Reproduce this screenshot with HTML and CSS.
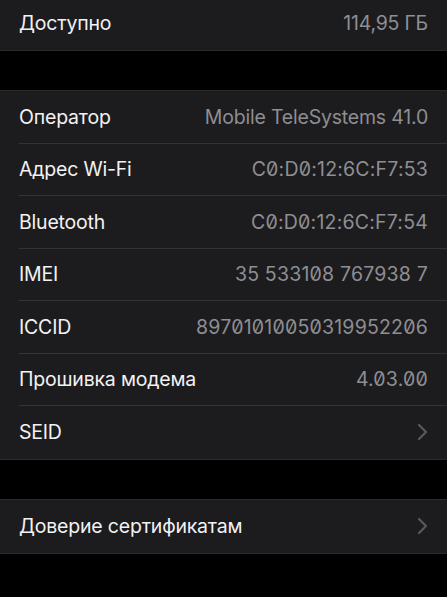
FILE: index.html
```html
<!DOCTYPE html>
<html lang="ru">
<head>
<meta charset="utf-8">
<link rel="stylesheet" href="styles.css">
</head>
<body>
<div class="page">
  <div class="group first">
    <div class="row"><span class="label">Доступно</span><span class="value">114,95 ГБ</span></div>
  </div>
  <div class="group">
    <div class="row"><span class="label">Оператор</span><span class="value">Mobile TeleSystems 41.0</span></div>
    <div class="row"><span class="label">Адрес Wi-Fi</span><span class="value num">C0:D0:12:6C:F7:53</span></div>
    <div class="row"><span class="label">Bluetooth</span><span class="value num">C0:D0:12:6C:F7:54</span></div>
    <div class="row"><span class="label">IMEI</span><span class="value num">35 533108 767938 7</span></div>
    <div class="row"><span class="label">ICCID</span><span class="value num">89701010050319952206</span></div>
    <div class="row"><span class="label">Прошивка модема</span><span class="value num">4.03.00</span></div>
    <div class="row"><span class="label">SEID</span><span class="chev"><svg width="11" height="18" viewBox="0 0 11 18"><path d="M2 2 L9 9 L2 16" fill="none" stroke="currentColor" stroke-width="2.2" stroke-linecap="round" stroke-linejoin="round"/></svg></span></div>
  </div>
  <div class="group">
    <div class="row"><span class="label">Доверие сертификатам</span><span class="chev"><svg width="11" height="18" viewBox="0 0 11 18"><path d="M2 2 L9 9 L2 16" fill="none" stroke="currentColor" stroke-width="2.2" stroke-linecap="round" stroke-linejoin="round"/></svg></span></div>
  </div>
</div>
</body>
</html>
```
FILE: styles.css
```css
html, body {
  margin: 0;
  padding: 0;
  background: #000;
}
body {
  width: 447px;
  height: 597px;
  overflow: hidden;
  font-family: Inter, "Noto Sans", sans-serif;
  font-size: 19.5px;
  -webkit-font-smoothing: antialiased;
}
.page {
  display: flex;
  flex-direction: column;
  gap: 41.5px;
  margin-top: -3px;
}
.group {
  background: #1c1c1e;
  box-shadow: 0 -1px 0 #2a2a2d, 0 1px 0 #2a2a2d;
  padding-left: 19px;
}
.row {
  height: 52.5px;
  box-sizing: border-box;
  display: flex;
  align-items: center;
  justify-content: space-between;
  padding-right: 19px;
  border-bottom: 1px solid #333336;
}
.row:last-child {
  border-bottom: none;
}
.label {
  color: #f2f2f4;
  letter-spacing: -0.2px;
}
.value {
  color: #8e8e93;
  letter-spacing: -0.2px;
}
.num {
  font-feature-settings: "zero" 1;
  letter-spacing: 0.2px;
}
.chev {
  color: #58585d;
  display: flex;
  align-items: center;
}
```
